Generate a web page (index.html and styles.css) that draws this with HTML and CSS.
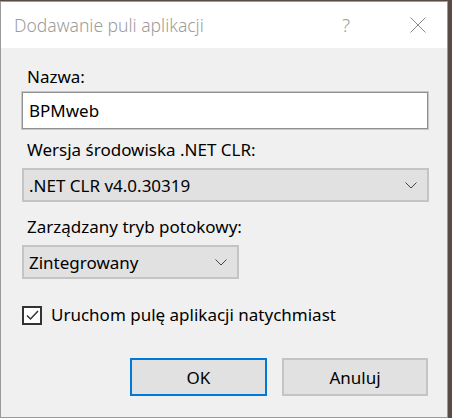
FILE: index.html
```html
<!DOCTYPE html>
<html lang="pl">
    <head>
        <meta charset="UTF-8" />
        <title>Dodawanie puli aplikacji</title>
        <link rel="stylesheet" href="styles.css">
    </head>
    <body>
        <div class="okno">
            <div class="pasekTytulu">
                <span class="tytul">Dodawanie puli aplikacji</span>
                <span class="pomoc">?</span>
                <span class="zamknij">
                    <svg width="16" height="16" viewBox="0 0 16 16"><path d="M0.5 0.5 L15.5 15.5 M15.5 0.5 L0.5 15.5" stroke="#8a8a8a" stroke-width="1" fill="none"/></svg>
                </span>
            </div>
            <div class="tresc">
                <label class="etykieta etNazwa">Nazwa:</label>
                <div class="pole">BPMweb</div>

                <label class="etykieta etWersja">Wersja środowiska .NET CLR:</label>
                <div class="lista szeroka">
                    <span>.NET CLR v4.0.30319</span>
                    <svg class="strzalka" width="12" height="7" viewBox="0 0 12 7"><path d="M0.5 0.5 L6 6 L11.5 0.5" stroke="#444" stroke-width="1" fill="none"/></svg>
                </div>

                <label class="etykieta etTryb">Zarządzany tryb potokowy:</label>
                <div class="lista waska">
                    <span>Zintegrowany</span>
                    <svg class="strzalka" width="12" height="7" viewBox="0 0 12 7"><path d="M0.5 0.5 L6 6 L11.5 0.5" stroke="#444" stroke-width="1" fill="none"/></svg>
                </div>

                <div class="zaznacz">
                    <span class="pudelko">
                        <svg width="15" height="15" viewBox="0 0 15 15"><path d="M2 7.5 L5.5 11 L13 3" stroke="#333" stroke-width="1.5" fill="none"/></svg>
                    </span>
                    <span>Uruchom pulę aplikacji natychmiast</span>
                </div>

                <div class="przyciski">
                    <button class="przycisk domyslny">OK</button>
                    <button class="przycisk">Anuluj</button>
                </div>
            </div>
        </div>
    </body>
</html>
```

FILE: styles.css
```css
*{
    margin: 0;
    padding: 0;
    box-sizing: border-box;
}
html{
    background-color: #5a4c44;
}
body{
    font-family: "Noto Sans", "Open Sans", sans-serif;
    font-size: 17px;
    color: #000;
    padding-top: 1px;
}
.okno{
    width: 448px;
    height: 417px;
    background-color: #f0f0f0;
    border: 1px solid #9a9a9a;
    display: flex;
    flex-direction: column;
}
.pasekTytulu{
    height: 46px;
    background-color: #fff;
    display: flex;
    align-items: center;
    padding-left: 13px;
}
.tytul{
    flex: 1;
    color: #9c9c9c;
    font-size: 17.5px;
    font-weight: 300;
}
.pomoc{
    color: #9c9c9c;
    font-size: 19px;
    font-weight: 300;
    width: 20px;
    margin-right: 39px;
}
.zamknij{
    width: 46px;
    display: flex;
    justify-content: flex-start;
    padding-left: 9px;
}
.tresc{
    padding: 0 19px 0 21px;
    display: flex;
    flex-direction: column;
}
.etykieta{
    display: block;
    line-height: 20px;
    padding-left: 5px;
}
.etNazwa{
    margin-top: 19px;
}
.pole{
    margin-top: 5px;
    height: 37px;
    background-color: #fff;
    border: 1px solid #8f8f8f;
    outline: 1px solid #c8c8c8;
    padding-left: 6px;
    line-height: 35px;
}
.etWersja{
    margin-top: 11px;
}
.etTryb{
    margin-top: 15px;
}
.lista{
    margin-top: 8px;
    height: 34px;
    background-color: #e1e1e1;
    border: 2px solid #c4c4c4;
    display: flex;
    align-items: center;
    justify-content: space-between;
    padding: 0 10px 0 5px;
}
.szeroka{
    width: 407px;
}
.waska{
    width: 217px;
}
.zaznacz{
    margin-top: 26px;
    display: flex;
    align-items: center;
    gap: 9px;
    line-height: 20px;
}
.pudelko{
    width: 20px;
    height: 19px;
    border: 2px solid #333;
    background-color: #fff;
    display: flex;
    align-items: center;
    justify-content: center;
}
.przyciski{
    margin-top: 33px;
    display: flex;
    justify-content: flex-end;
    gap: 15px;
}
.przycisk{
    width: 146px;
    height: 38px;
    background-color: #e1e1e1;
    border: 2px solid #c4c4c4;
    font-family: inherit;
    font-size: 17px;
    color: #000;
}
.domyslny{
    width: 137px;
    border-color: #0078d7;
}
```
